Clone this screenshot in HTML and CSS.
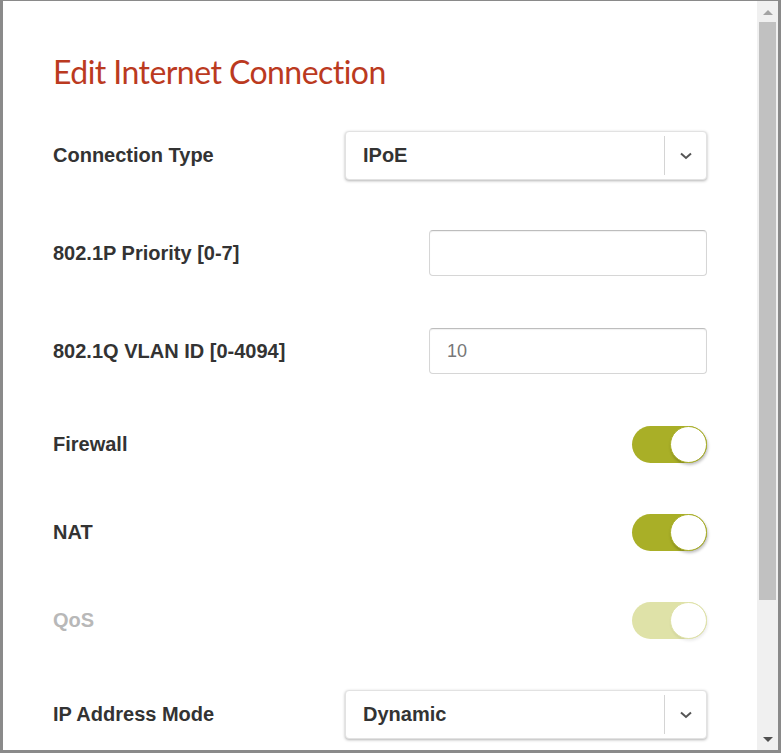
FILE: index.html
```html
<!DOCTYPE html>
<html lang="en">
<head>
    <meta charset="UTF-8">
    <meta name="viewport" content="width=device-width, initial-scale=1.0">
    <title>Edit Internet Connection</title>
    <link rel="stylesheet" href="styles.css">
</head>
<body>
    <div class="dialog">
        <div class="dialog-body">
            <h1>Edit Internet Connection</h1>

            <div class="row row-select">
                <label>Connection Type</label>
                <div class="select">
                    <span class="select-value">IPoE</span>
                    <span class="select-arrow">
                        <svg width="12" height="8" viewBox="0 0 12 8"><path d="M1 1.5 L6 6 L11 1.5" fill="none" stroke="#555" stroke-width="2"/></svg>
                    </span>
                </div>
            </div>

            <div class="row row-input">
                <label>802.1P Priority [0-7]</label>
                <input type="text" class="text-input">
            </div>

            <div class="row row-input">
                <label>802.1Q VLAN ID [0-4094]</label>
                <input type="text" class="text-input" value="10">
            </div>

            <div class="row row-toggle">
                <label>Firewall</label>
                <div class="toggle on"><span class="knob"></span></div>
            </div>

            <div class="row row-toggle">
                <label>NAT</label>
                <div class="toggle on"><span class="knob"></span></div>
            </div>

            <div class="row row-toggle disabled">
                <label>QoS</label>
                <div class="toggle on"><span class="knob"></span></div>
            </div>

            <div class="row row-select">
                <label>IP Address Mode</label>
                <div class="select">
                    <span class="select-value">Dynamic</span>
                    <span class="select-arrow">
                        <svg width="12" height="8" viewBox="0 0 12 8"><path d="M1 1.5 L6 6 L11 1.5" fill="none" stroke="#555" stroke-width="2"/></svg>
                    </span>
                </div>
            </div>
        </div>

        <div class="scrollbar">
            <span class="scroll-up"></span>
            <div class="scroll-thumb"></div>
            <div class="scroll-rest"></div>
            <span class="scroll-down"></span>
        </div>
    </div>
</body>
</html>
```

FILE: styles.css
```css
body {
  margin: 0;
  padding: 1px 3px 3px 3px;
  height: 753px;
  box-sizing: border-box;
  overflow: hidden;
  background-color: #8a8a8a;
  font-family: "Liberation Sans", Arial, sans-serif;
}

.dialog {
  display: flex;
  height: 749px;
  background-color: #fff;
  overflow: hidden;
}

.dialog-body {
  flex: 1;
  padding: 52px 50px 0 50px;
  overflow: hidden;
}

h1 {
  margin: 0 0 40px 0;
  font-family: Lato, sans-serif;
  font-weight: 400;
  font-size: 32px;
  line-height: 38px;
  letter-spacing: -0.55px;
  color: #bb3a1f;
}

.row {
  display: flex;
  justify-content: space-between;
  align-items: center;
}

.row label {
  font-size: 20px;
  font-weight: bold;
  color: #333;
}

.row-select {
  margin-bottom: 50px;
}

.row-input {
  margin-bottom: 52px;
}

.row-toggle {
  margin-bottom: 51px;
}

.row.disabled label {
  color: #b8b8b8;
}

/* select box */
.select {
  display: flex;
  align-items: center;
  width: 362px;
  height: 49px;
  box-sizing: border-box;
  border: 1px solid #e2e2e2;
  border-radius: 4px;
  box-shadow: 0 1px 3px rgba(0, 0, 0, 0.3);
  background-color: #fff;
}

.select-value {
  flex: 1;
  padding-left: 17px;
  font-size: 20px;
  font-weight: bold;
  color: #333;
}

.select-arrow {
  display: flex;
  align-items: center;
  justify-content: center;
  width: 41px;
  height: 39px;
  border-left: 1px solid #d4d4d4;
}

/* text inputs */
.text-input {
  width: 278px;
  height: 46px;
  box-sizing: border-box;
  padding: 0 17px;
  border: 1px solid #d6d6d6;
  border-top-color: #bdbdbd;
  border-radius: 4px;
  box-shadow: inset 0 1px 1px rgba(0, 0, 0, 0.06);
  font-family: "Liberation Sans", Arial, sans-serif;
  font-size: 18px;
  color: #777;
  outline: none;
}

/* switches */
.toggle {
  display: flex;
  justify-content: flex-end;
  width: 75px;
  height: 37px;
  border-radius: 19px;
  background-color: #a9af27;
}

.toggle .knob {
  width: 35px;
  height: 35px;
  border-radius: 50%;
  border: 1px solid #a9af27;
  background-color: #fff;
  box-shadow: 1px 2px 3px rgba(0, 0, 0, 0.25);
}

.disabled .toggle {
  background-color: #dfe2a8;
}

.disabled .toggle .knob {
  border-color: #dfe2a8;
  box-shadow: 1px 2px 3px rgba(0, 0, 0, 0.08);
}

/* fake scrollbar */
.scrollbar {
  display: flex;
  flex-direction: column;
  align-items: center;
  width: 21px;
  background-color: #f0f0f0;
}

.scroll-up {
  margin: 9px 0 7px 0;
  border-left: 5px solid transparent;
  border-right: 5px solid transparent;
  border-bottom: 5px solid #a3a3a3;
}

.scroll-thumb {
  width: 17px;
  height: 578px;
  background-color: #c1c1c1;
}

.scroll-rest {
  flex: 1;
}

.scroll-down {
  margin: 0 0 8px 0;
  border-left: 5px solid transparent;
  border-right: 5px solid transparent;
  border-top: 5px solid #505050;
}
```
